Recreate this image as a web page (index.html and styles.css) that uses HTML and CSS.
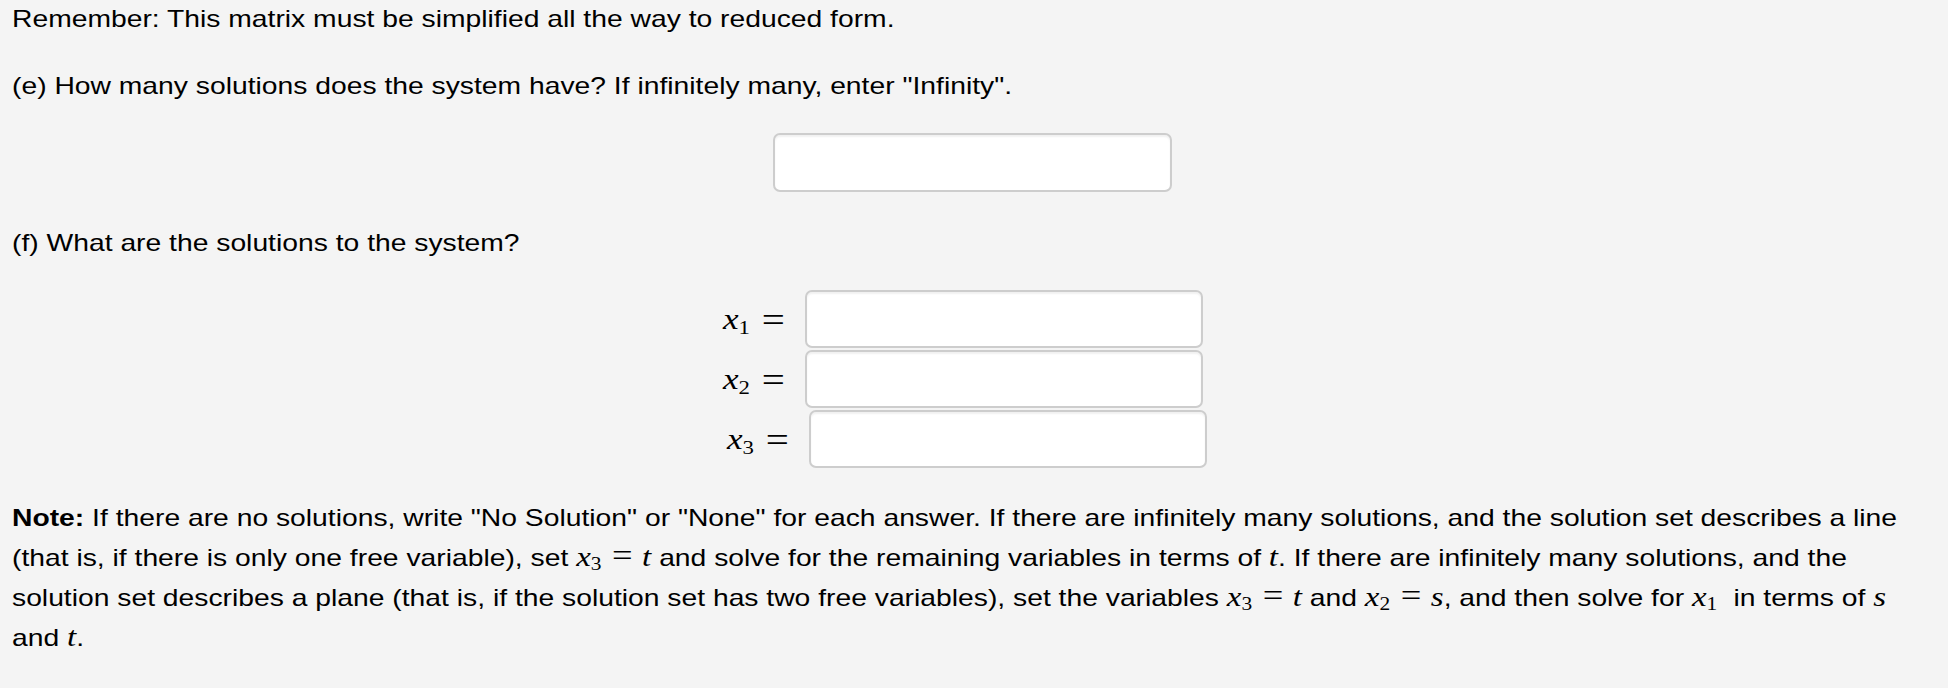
FILE: index.html
```html
<!DOCTYPE html>
<html lang="en">
<head>
  <meta charset="UTF-8">
  <meta name="viewport" content="width=device-width, initial-scale=1.0">
  <title>Linear System - Parts e and f</title>
  <link rel="stylesheet" href="styles.css">
</head>
<body>

<div class="problem">
  <p class="remember wide">Remember: This matrix must be simplified all the way to reduced form.</p>

  <p class="part part-e wide">(e) How many solutions does the system have? If infinitely many, enter "Infinity".</p>
  <div class="answer-line">
    <input type="text" class="answer" aria-label="Number of solutions">
  </div>

  <p class="part part-f wide">(f) What are the solutions to the system?</p>
  <div class="system">
    <label class="eq">
      <span class="lhs"><span class="lhs-inner wide"><span class="math"><i>x</i><sub>1</sub></span><span class="eq-sign">=</span></span></span>
      <input type="text" class="answer">
    </label>
    <label class="eq">
      <span class="lhs"><span class="lhs-inner wide"><span class="math"><i>x</i><sub>2</sub></span><span class="eq-sign">=</span></span></span>
      <input type="text" class="answer">
    </label>
    <label class="eq shifted">
      <span class="lhs"><span class="lhs-inner wide"><span class="math"><i>x</i><sub>3</sub></span><span class="eq-sign">=</span></span></span>
      <input type="text" class="answer">
    </label>
  </div>

  <p class="note wide"><b>Note:</b> If there are no solutions, write "No Solution" or "None" for each answer. If there are infinitely many solutions, and the solution set describes a line (that is, if there is only one free variable), set <span class="math"><i>x</i><sub>3</sub><span class="rel">=</span><i>t</i></span> and solve for the remaining variables in terms of <span class="math"><i>t</i></span>. If there are infinitely many solutions, and the solution set describes a plane (that is, if the solution set has two free variables), set the variables <span class="math"><i>x</i><sub>3</sub><span class="rel">=</span><i>t</i></span> and <span class="math"><i>x</i><sub>2</sub><span class="rel">=</span><i>s</i></span>, and then solve for <span class="math trail"><i>x</i><sub>1</sub></span> in terms of <span class="math"><i>s</i></span> and <span class="math"><i>t</i></span>.</p>
</div>

</body>
</html>
```

FILE: styles.css
```css
body {
  margin: 0;
  background: #f4f4f4;
  color: #000;
  font-family: 'Liberation Sans', Arial, sans-serif;
  font-size: 24px;
}

.problem {
  padding: 0 12px;
}

p {
  margin: 0;
}

/* the text in this page is drawn a little wider than the font */
.wide {
  transform: scaleX(1.178);
  transform-origin: left center;
}

.remember,
.part {
  width: fit-content;
  line-height: 38px;
}

.part-e {
  margin-top: 29px;
}

.part-f {
  margin-top: 32px;
}

.answer-line {
  display: flex;
  justify-content: center;
  margin-top: 28px;
  padding-right: 3px;
}

.answer {
  box-sizing: border-box;
  width: 399px;
  height: 59px;
  border: 2px solid #cdcdcd;
  border-radius: 7px;
  background: #fff;
  box-shadow: inset 0 2px 2px rgba(0, 0, 0, 0.06);
  font-size: 24px;
  padding: 0 10px;
  margin: 0;
}

.system {
  width: fit-content;
  margin: 28px auto 0;
  padding-right: 18px;
  display: flex;
  flex-direction: column;
  gap: 2px;
}

.system .answer {
  width: 398px;
  height: 58px;
}

.eq {
  display: flex;
  align-items: center;
}

.eq.shifted {
  padding-left: 4px;
}

.lhs {
  width: 82px;
  flex: none;
}

.lhs-inner {
  display: inline-flex;
  align-items: center;
  white-space: nowrap;
  transform: scaleX(1.17);
}

.math {
  font-family: 'Liberation Serif', 'Times New Roman', serif;
  font-size: 28px;
  line-height: 1;
  white-space: nowrap;
}

.math sub {
  font-size: 0.65em;
  vertical-align: baseline;
  position: relative;
  top: 0.24em;
  line-height: 0;
}

.lhs .math {
  font-size: 30px;
}

.eq-sign {
  font-family: 'Liberation Serif', 'Times New Roman', serif;
  font-size: 35px;
  line-height: 1;
  margin-left: 10px;
  padding-top: 2px;
}

.rel {
  font-size: 31px;
  margin: 0 8px 0 9px;
}

.trail {
  margin-right: 7px;
}

.note {
  margin-top: 30px;
  line-height: 40px;
  width: 1620px;
}
```
